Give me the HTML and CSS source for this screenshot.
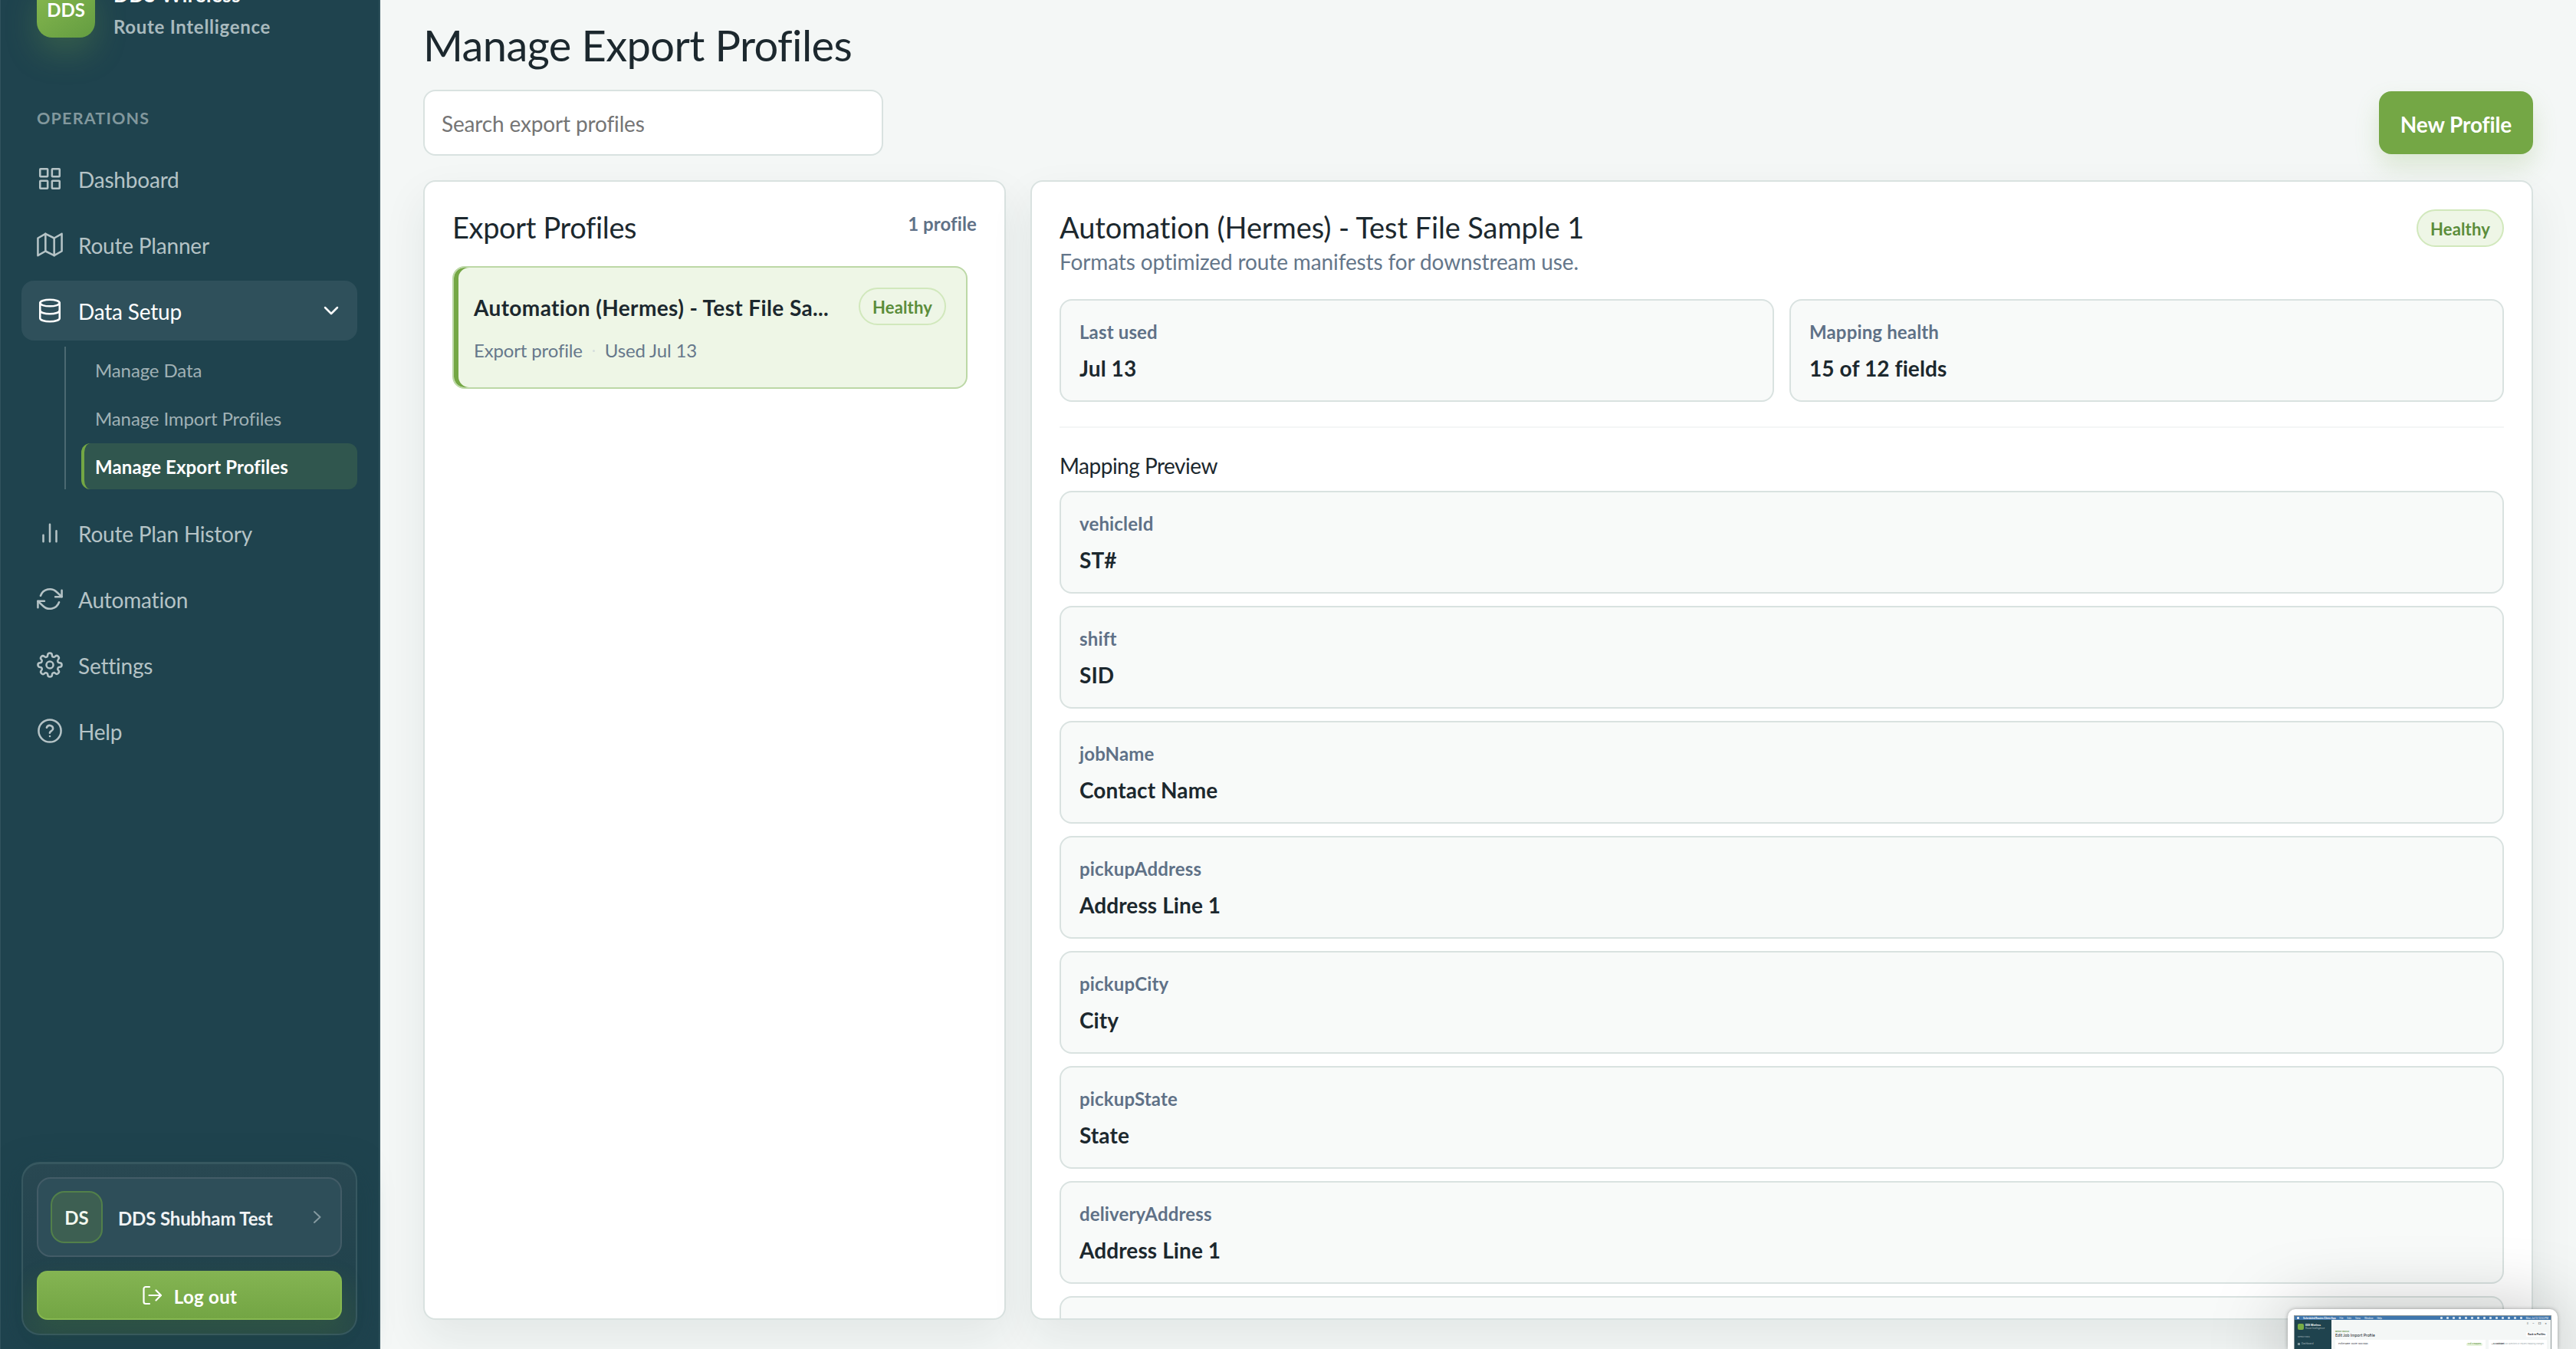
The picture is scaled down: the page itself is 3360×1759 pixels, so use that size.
FILE: index.html
```html
<!DOCTYPE html>
<html lang="en">
<head>
<meta charset="utf-8">
<title>Manage Export Profiles</title>
<link rel="stylesheet" href="styles.css">
</head>
<body>
<aside class="sidebar">
  <div class="brand">
    <div class="brand-mark">DDS</div>
    <div class="brand-text"><div class="brand-name">DDS Wireless</div><div class="brand-sub">Route Intelligence</div></div>
  </div>
  <div class="nav-title">OPERATIONS</div>
  <nav class="nav">
    <a class="nav-item"><svg class="icon" viewBox="0 0 24 24"><rect x="3" y="3" width="7" height="7" rx=".5"/><rect x="14" y="3" width="7" height="7" rx=".5"/><rect x="14" y="14" width="7" height="7" rx=".5"/><rect x="3" y="14" width="7" height="7" rx=".5"/></svg><span>Dashboard</span></a>
    <a class="nav-item"><svg class="icon" viewBox="0 0 24 24"><path d="M1 6v16l7-4 8 4 7-4V2l-7 4-8-4-7 4z"/><path d="M8 2v16M16 6v16"/></svg><span>Route Planner</span></a>
    <a class="nav-item open"><svg class="icon" viewBox="0 0 24 24"><ellipse cx="12" cy="5" rx="9" ry="3"/><path d="M21 12c0 1.66-4 3-9 3s-9-1.340-9-3"/><path d="M3 5v14c0 1.660 4 3 9 3s9-1.340 9-3V5"/></svg><span>Data Setup</span><svg class="chev-down" viewBox="0 0 20 12"><path d="M2 2l8 8 8-8"/></svg></a>
    <div class="subnav">
      <a class="sub-item">Manage Data</a>
      <a class="sub-item">Manage Import Profiles</a>
      <a class="sub-item active">Manage Export Profiles</a>
    </div>
    <a class="nav-item"><svg class="icon" viewBox="0 0 24 24"><path d="M18 20V10M12 20V4M6 20v-6"/></svg><span>Route Plan History</span></a>
    <a class="nav-item"><svg class="icon" viewBox="0 0 24 24"><path d="M23 4v6h-6"/><path d="M1 20v-6h6"/><path d="M3.510 9a9 9 0 0 1 14.850-3.360L23 10M1 14l4.640 4.360A9 9 0 0 0 20.490 15"/></svg><span>Automation</span></a>
    <a class="nav-item"><svg class="icon" viewBox="0 0 24 24"><circle cx="12" cy="12" r="3.200"/><path d="M19.400 15a1.650 1.650 0 0 0 .330 1.820l.060.060a2 2 0 0 1-2.830 2.830l-.060-.060a1.650 1.650 0 0 0-1.820-.330 1.650 1.650 0 0 0-1 1.510V21a2 2 0 0 1-4 0v-.090A1.650 1.650 0 0 0 9 19.400a1.650 1.650 0 0 0-1.820.330l-.060.060a2 2 0 0 1-2.830-2.830l.060-.060a1.650 1.650 0 0 0 .330-1.820 1.650 1.650 0 0 0-1.510-1H3a2 2 0 0 1 0-4h.090A1.650 1.650 0 0 0 4.600 9a1.650 1.650 0 0 0-.330-1.820l-.060-.060a2 2 0 0 1 2.830-2.830l.060.060a1.650 1.650 0 0 0 1.820.330H9a1.650 1.650 0 0 0 1-1.510V3a2 2 0 0 1 4 0v.090a1.650 1.650 0 0 0 1 1.510 1.650 1.650 0 0 0 1.820-.330l.060-.060a2 2 0 0 1 2.830 2.830l-.060.060a1.650 1.650 0 0 0-.330 1.820V9a1.650 1.650 0 0 0 1.510 1H21a2 2 0 0 1 0 4h-.090a1.650 1.650 0 0 0-1.510 1z"/></svg><span>Settings</span></a>
    <a class="nav-item"><svg class="icon" viewBox="0 0 24 24"><circle cx="12" cy="12" r="10.300"/><path d="M9.090 9a3 3 0 0 1 5.830 1c0 2-3 2.200-3 4"/><path d="M12 17h.010"/></svg><span>Help</span></a>
  </nav>
  <div class="account">
    <div class="user"><div class="avatar">DS</div><span class="user-name">DDS Shubham Test</span><svg class="chev-right" viewBox="0 0 12 18"><path d="M2 2l7.500 7L2 16"/></svg></div>
    <button class="logout"><svg class="logout-icon" viewBox="0 0 26 26"><path d="M10 2H5a2.500 2.500 0 0 0-2.500 2.500v17A2.500 2.500 0 0 0 5 24h5M9.500 13H25M18.500 6.500L25 13l-6.500 6.500"/></svg><span>Log out</span></button>
  </div>
</aside>
<main class="main">
  <h1 class="page-title">Manage Export Profiles</h1>
  <div class="toolbar">
    <input class="search" type="text" placeholder="Search export profiles">
    <button class="new-btn">New Profile</button>
  </div>
  <div class="panels">
    <section class="panel list-panel">
      <div class="list-head"><h2 class="h2">Export Profiles</h2><span class="count">1 profile</span></div>
      <div class="profile-card">
        <div class="profile-row"><span class="profile-name">Automation (Hermes) - Test File Sa...</span><span class="pill">Healthy</span></div>
        <div class="profile-meta"><span>Export profile</span><i class="dot"></i><span>Used Jul 13</span></div>
      </div>
    </section>
    <section class="panel detail-panel">
      <div class="detail-head"><div><h2 class="h2 detail-title">Automation (Hermes) - Test File Sample 1</h2><p class="desc">Formats optimized route manifests for downstream use.</p></div><span class="pill">Healthy</span></div>
      <div class="stats">
        <div class="field"><span class="label">Last used</span><span class="value">Jul 13</span></div>
        <div class="field"><span class="label">Mapping health</span><span class="value">15 of 12 fields</span></div>
      </div>
      <h3 class="h3">Mapping Preview</h3>
      <div class="mappings">
        <div class="field"><span class="label">vehicleId</span><span class="value">ST#</span></div>
        <div class="field"><span class="label">shift</span><span class="value">SID</span></div>
        <div class="field"><span class="label">jobName</span><span class="value">Contact Name</span></div>
        <div class="field"><span class="label">pickupAddress</span><span class="value">Address Line 1</span></div>
        <div class="field"><span class="label">pickupCity</span><span class="value">City</span></div>
        <div class="field"><span class="label">pickupState</span><span class="value">State</span></div>
        <div class="field"><span class="label">deliveryAddress</span><span class="value">Address Line 1</span></div>
        <div class="field"></div>
      </div>
    </section>
  </div>
</main>
<div class="thumb">
  <div class="thumb-screen">
    <div class="thumb-menu"><i class="apple"></i><b>Scheduled Routes Client App</b><span>File</span><span>Edit</span><span>View</span><span>Window</span><span>Help</span><div class="thumb-tray"><i></i><i></i><i></i><i></i><i></i><i></i><i></i><i></i><i></i><i></i><i></i><i></i><i></i><i></i></div><span>Mon Jul 13 12:53 PM</span></div>
    <div class="thumb-body">
      <div class="thumb-side"><div class="thumb-brand"><i></i><div><b>DDS Wireless</b><span>Route Intelligence</span></div></div><small>OPERATIONS</small><div class="thumb-dash"><i></i>Dashboard</div></div>
      <div class="thumb-main">
        <div class="thumb-controls"><span>≡</span><span>−</span><span>□</span><span>×</span></div>
        <div class="thumb-head"><div><small>IMPORT PROFILE</small><strong>Edit Job Import Profile</strong></div><b class="thumb-back">Back to Profiles</b></div>
        <div class="thumb-cards"><div class="thumb-card wide"><span>Profile Name&nbsp; courier 1000 stops</span><em>3 of 3 mapped</em></div><div class="thumb-card"><b>• AI Assistant</b><span class="faint">Ask questions or request mapping changes</span></div></div>
      </div>
    </div>
  </div>
</div>
</body>
</html>
```
FILE: styles.css
```css
* { box-sizing: border-box; }
body { margin: 0; width: 3360px; height: 1759px; overflow: hidden; display: flex; position: relative; background: #f4f7f6; color: #1c282e; font-family: Lato, "Noto Sans", sans-serif; font-variant-ligatures: none; }
h1, h2, h3, p { margin: 0; font-weight: 400; }
button { font-family: inherit; border: 0; padding: 0; }
svg { fill: none; stroke: currentColor; stroke-linecap: round; stroke-linejoin: round; flex: none; display: block; }

/* Sidebar */
.sidebar { width: 496px; height: 1759px; flex: none; background: #1f434e; border-left: 1px solid #31535d; border-right: 2px solid #2e515b; padding: 0 28px 18px 27px; display: flex; flex-direction: column; }
.brand { display: flex; gap: 24px; margin-top: -27px; padding-left: 20px; height: 76px; }
.brand-mark { width: 76px; height: 76px; border-radius: 20px; background: linear-gradient(145deg, #8bbb50, #639c41); box-shadow: 0 20px 40px rgba(116, 167, 68, .26); color: #fff; font-weight: 700; font-size: 24px; line-height: 80px; text-align: center; }
.brand-name { font-size: 26px; font-weight: 700; line-height: 32px; margin-top: 4px; color: #fff; letter-spacing: .5px; }
.brand-sub { font-size: 24px; font-weight: 700; line-height: 30px; margin-top: 11px; color: #a9babe; letter-spacing: .7px; }
.nav-title { margin: 91px 0 25px 20px; font-size: 21.500px; line-height: 29px; font-weight: 700; letter-spacing: 1.200px; color: #82989d; }
.nav { display: flex; flex-direction: column; gap: 8px; }
.nav-item { height: 78px; border-radius: 16px; padding: 0 24px 0 20px; display: flex; align-items: center; gap: 20px; font-size: 28px; letter-spacing: -.2px; color: #b5c3c6; }
.nav-item span { padding-top: 2px; flex: 1; }
.nav-item.open { background: #2f505b; color: #fff; }
.icon { width: 34px; height: 34px; stroke-width: 1.800; }
.chev-down { width: 20px; height: 12px; stroke-width: 2.500; }
.subnav { margin: 0 0 10px 56px; border-left: 2px solid #4b6971; padding-left: 20px; display: flex; flex-direction: column; gap: 3px; }
.sub-item { height: 60px; line-height: 61px; padding-left: 14px; border-left: 4px solid transparent; border-radius: 12px; font-size: 24px; letter-spacing: -.12px; color: #a0b1b5; }
.sub-item.active { background: #30564e; border-left-color: #73a744; color: #fff; font-weight: 700; letter-spacing: .1px; }
.account { margin-top: auto; height: 226px; border: 2px solid #375860; border-top-width: 3px; border-radius: 24px; padding: 17px 18px 18px; display: flex; flex-direction: column; gap: 18px; background: linear-gradient(#294852, #22434d 60%, #294b49); box-shadow: 0 12px 40px rgba(27, 62, 72, .6); }
.user { height: 104px; border: 2px solid #435c67; border-radius: 18px; background: #2e4e59; display: flex; align-items: center; padding: 0 24px 0 16px; }
.avatar { width: 68px; height: 68px; border: 2px solid #52804a; border-radius: 18px; background: #3d5f52; color: #f2f8ee; font-size: 24px; font-weight: 700; line-height: 66px; text-align: center; }
.user-name { flex: 1; margin-left: 20px; padding-top: 3px; font-size: 24px; font-weight: 700; color: #f1f3f5; letter-spacing: -.15px; }
.chev-right { width: 12px; height: 18px; color: #8499a0; stroke-width: 2; }
.logout { height: 64px; border: 2px solid #87b850; border-top-color: #84b452; border-radius: 14px; background: linear-gradient(#84b452, #73a544); box-shadow: 0 12px 30px rgba(70, 120, 50, .24); color: #fff; font-size: 24px; font-weight: 700; display: flex; align-items: center; justify-content: center; gap: 16px; }
.logout span { padding-top: 3px; letter-spacing: .3px; }
.logout-icon { width: 26px; height: 26px; stroke-width: 2.200; }

/* Main */
.main { flex: 1; height: 1759px; padding: 25px 56px 0; }
.page-title { font-size: 56px; line-height: 68px; letter-spacing: -.6px; }
.toolbar { margin-top: 24px; height: 86px; display: flex; justify-content: space-between; align-items: center; }
.search { width: 600px; height: 86px; border: 2px solid #d9e2e0; border-radius: 16px; background: #fff; padding: 2px 22px 0; font-family: inherit; font-size: 28px; letter-spacing: -.15px; color: #1c282e; }
.search::placeholder { color: #757575; opacity: 1; }
.new-btn { width: 201px; height: 82px; border-radius: 16px; background: #74a745; color: #fff; font-size: 28px; font-weight: 700; padding-top: 3px; letter-spacing: -.1px; box-shadow: 0 16px 32px rgba(116, 167, 69, .2); }
.panels { margin-top: 32px; display: flex; gap: 32px; height: 1486px; }
.panel { background: #fff; border: 2px solid #d9e2e0; border-radius: 16px; padding: 36px; overflow: hidden; box-shadow: 0 24px 56px rgba(31, 45, 45, .08); }
.list-panel { width: 760px; flex: none; }
.detail-panel { flex: 1; }
.h2 { font-size: 38px; line-height: 46px; letter-spacing: -.35px; }
.detail-title { letter-spacing: -.1px; }
.list-head { display: flex; justify-content: space-between; height: 74px; }
.count { margin-top: 4px; font-size: 24px; font-weight: 700; line-height: 30px; letter-spacing: .1px; color: #5f7187; }
.profile-card { width: 672px; height: 160px; border: 2px solid #bcd8a6; border-radius: 16px; background: #eef6e6; box-shadow: inset 6px 0 #74a745; padding: 26px; }
.profile-row { display: flex; justify-content: space-between; align-items: center; }
.profile-name { font-size: 28px; font-weight: 700; line-height: 34px; padding-top: 2px; white-space: nowrap; letter-spacing: .38px; }
.profile-meta { display: flex; align-items: center; margin-top: 18px; font-size: 24px; line-height: 30px; letter-spacing: -.15px; color: #66788b; }
.dot { width: 3px; height: 3px; border-radius: 50%; background: #d5dedd; margin: 0 13px; }
.pill { width: 114px; height: 49px; flex: none; border: 2px solid #d1e8bc; border-radius: 25px; background: #eef6e6; color: #5b8d3b; font-size: 22px; font-weight: 700; line-height: 47px; letter-spacing: .15px; text-align: center; }
.detail-head { display: flex; justify-content: space-between; height: 117px; }
.desc { margin-top: 5px; font-size: 28px; line-height: 34px; color: #64768a; letter-spacing: -.12px; }
.stats { display: grid; grid-template-columns: 1fr 1fr; gap: 20px; padding-bottom: 32px; border-bottom: 2px solid #f4f6f6; }
.field { height: 134px; flex: none; border: 2px solid #d9e2e0; border-radius: 16px; background: #f8faf9; padding: 26px 24px; display: flex; flex-direction: column; gap: 15px; }
.label { font-size: 24px; font-weight: 700; line-height: 30px; letter-spacing: .15px; color: #5f7187; }
.value { font-size: 28px; font-weight: 700; line-height: 34px; letter-spacing: .1px; }
.h3 { margin: 32px 0 16px; font-size: 28px; line-height: 34px; letter-spacing: -.5px; }
.mappings { display: flex; flex-direction: column; gap: 16px; }

/* Floating screen capture preview */
.thumb { position: absolute; left: 2984px; top: 1707px; width: 352px; height: 52px; padding: 8px 8px 0; border-radius: 10px 10px 0 0; background: #fff; box-shadow: 0 0 5px rgba(0, 0, 0, .3), 0 16px 100px rgba(0, 0, 0, .4); font-family: Inter, sans-serif; font-size: 3px; line-height: 4px; white-space: nowrap; }
.thumb-screen { border: 1px solid #8c9699; border-bottom: 0; height: 44px; overflow: hidden; background: #f4f7f6; }
.thumb-menu { height: 5px; background: #3f76ad; color: #fff; display: flex; align-items: center; gap: 5px; padding: 0 3px; }
.apple { width: 3px; height: 3px; border-radius: 50%; background: #fff; }
.thumb-tray { margin-left: auto; display: flex; gap: 5px; }
.thumb-tray i { width: 3px; height: 3px; border-radius: 1px; background: #d4e2ef; }
.thumb-body { display: flex; height: 38px; }
.thumb-side { width: 48px; flex: none; background: #1f434e; color: #a9babe; padding: 5px 4px 0; }
.thumb-brand { display: flex; gap: 2px; }
.thumb-brand > i { width: 8px; height: 8px; border-radius: 2px; background: #78ad45; }
.thumb-brand b, .thumb-brand span { display: block; }
.thumb-brand b { color: #fff; }
.thumb-side small { display: block; font-size: 2.500px; margin-top: 8px; }
.thumb-dash { display: flex; gap: 2px; align-items: center; margin-top: 4px; }
.thumb-dash i { width: 3px; height: 3px; background: #82989d; }
.thumb-main { flex: 1; padding: 3px 5px 0; }
.thumb-controls { display: flex; justify-content: flex-end; gap: 5px; height: 5px; font-size: 4px; }
.thumb-head { display: flex; justify-content: space-between; align-items: center; margin-top: 5px; height: 12px; }
.thumb-head small { display: block; font-size: 2.200px; line-height: 3px; font-weight: 700; color: #5b8d3b; }
.thumb-head strong { display: block; font: 400 5.300px/7px Lato, sans-serif; }
.thumb-back { background: #fff; border-radius: 1px; padding: 1px 2px; }
.thumb-cards { display: flex; gap: 4px; margin-top: 1px; }
.thumb-card { flex: 1; background: #fff; height: 12px; padding: 4px 4px 0; display: flex; justify-content: space-between; font-size: 2.500px; }
.thumb-card.wide { flex: 0 0 196px; }
.thumb-card em { font-style: normal; color: #5b8d3b; background: #e6f3da; border-radius: 2px; height: 4px; padding: 0 2px; }
.faint { color: #9aa8ab; }
```
